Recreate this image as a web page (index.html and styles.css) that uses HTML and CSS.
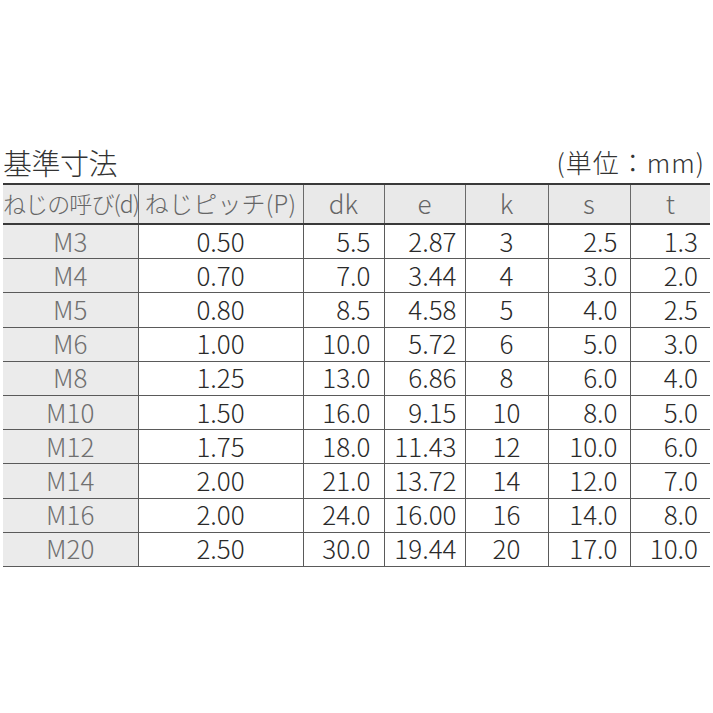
FILE: index.html
```html
<!DOCTYPE html>
<html lang="ja">
<head>
<meta charset="utf-8">
<link rel="stylesheet" href="styles.css">
</head>
<body>
<div class="page">
  <div class="caption">
    <span class="title">基準寸法</span>
    <span class="unit">(単位：mm)</span>
  </div>
  <table class="spec">
    <colgroup>
      <col class="c1"><col class="c2"><col class="c3"><col class="c4"><col class="c5"><col class="c6"><col class="c7">
    </colgroup>
    <thead>
      <tr>
        <th class="jp">ねじの呼び(d)</th><th class="jp2">ねじピッチ(P)</th><th>dk</th><th>e</th><th>k</th><th>s</th><th>t</th>
      </tr>
    </thead>
    <tbody>
      <tr><td class="name">M3</td><td class="ctr">0.50</td><td class="r1">5.5</td><td class="r2">2.87</td><td class="ctr">3</td><td class="r3">2.5</td><td class="r4">1.3</td></tr>
      <tr><td class="name">M4</td><td class="ctr">0.70</td><td class="r1">7.0</td><td class="r2">3.44</td><td class="ctr">4</td><td class="r3">3.0</td><td class="r4">2.0</td></tr>
      <tr><td class="name">M5</td><td class="ctr">0.80</td><td class="r1">8.5</td><td class="r2">4.58</td><td class="ctr">5</td><td class="r3">4.0</td><td class="r4">2.5</td></tr>
      <tr><td class="name">M6</td><td class="ctr">1.00</td><td class="r1">10.0</td><td class="r2">5.72</td><td class="ctr">6</td><td class="r3">5.0</td><td class="r4">3.0</td></tr>
      <tr><td class="name">M8</td><td class="ctr">1.25</td><td class="r1">13.0</td><td class="r2">6.86</td><td class="ctr">8</td><td class="r3">6.0</td><td class="r4">4.0</td></tr>
      <tr><td class="name">M10</td><td class="ctr">1.50</td><td class="r1">16.0</td><td class="r2">9.15</td><td class="ctr">10</td><td class="r3">8.0</td><td class="r4">5.0</td></tr>
      <tr><td class="name">M12</td><td class="ctr">1.75</td><td class="r1">18.0</td><td class="r2">11.43</td><td class="ctr">12</td><td class="r3">10.0</td><td class="r4">6.0</td></tr>
      <tr><td class="name">M14</td><td class="ctr">2.00</td><td class="r1">21.0</td><td class="r2">13.72</td><td class="ctr">14</td><td class="r3">12.0</td><td class="r4">7.0</td></tr>
      <tr><td class="name">M16</td><td class="ctr">2.00</td><td class="r1">24.0</td><td class="r2">16.00</td><td class="ctr">16</td><td class="r3">14.0</td><td class="r4">8.0</td></tr>
      <tr><td class="name">M20</td><td class="ctr">2.50</td><td class="r1">30.0</td><td class="r2">19.44</td><td class="ctr">20</td><td class="r3">17.0</td><td class="r4">10.0</td></tr>
    </tbody>
  </table>
</div>
</body>
</html>
```
FILE: styles.css
```css
html, body {
  margin: 0;
  padding: 0;
  background: #ffffff;
}
body {
  font-family: "Noto Sans CJK JP", "Noto Sans", sans-serif;
  font-weight: 300;
  color: #2a2a2a;
}
.page {
  width: 707px;
  padding: 139px 0 0 3px;
}
.caption {
  display: flex;
  justify-content: space-between;
  align-items: flex-end;
  height: 43px;
}
.title {
  font-size: 29px;
  line-height: 40px;
  color: #333;
  letter-spacing: -0.5px;
}
.unit {
  font-size: 26px;
  line-height: 40px;
  color: #333;
  margin-right: 5px;
  letter-spacing: 1px;
}
.spec {
  border-collapse: collapse;
  table-layout: fixed;
  width: 707px;
  margin-top: 1px;
}
.c1 { width: 135px; }
.c2 { width: 165px; }
.c3 { width: 81px; }
.c4 { width: 81px; }
.c5 { width: 83px; }
.c6 { width: 82px; }
.c7 { width: 80px; }

.spec th {
  background: #e9e9e9;
  color: #666;
  font-weight: 300;
  font-size: 26px;
  line-height: 32px;
  height: 35px;
  padding: 0 0 3px 0;
  border-top: 2.5px solid #3a3a3a;
  border-bottom: 2.5px solid #3a3a3a;
  border-left: 1.5px solid #6a6a6a;
  white-space: nowrap;
}
.spec th.jp {
  font-size: 23px;
  letter-spacing: -0.9px;
}
.spec th.jp2 {
  font-size: 24px;
  letter-spacing: 0.2px;
}
.spec th:first-child { border-left: none; }
.spec td {
  height: 31.2px;
  padding: 0 0 2px 0;
  font-size: 26px;
  line-height: 30px;
  border-bottom: 1.5px solid #5a5a5a;
  border-left: 1.5px solid #5a5a5a;
  color: #2a2a2a;
  white-space: nowrap;
}
.spec td:first-child { border-left: none; }
.spec td.name {
  background: #ebebeb;
  color: #707070;
  text-align: center;
}
.ctr { text-align: center; }
.r1 { text-align: right; padding-right: 13px !important; }
.r2 { text-align: right; padding-right: 8px !important; }
.r3 { text-align: right; padding-right: 12px !important; }
.r4 { text-align: right; padding-right: 12px !important; }
```
